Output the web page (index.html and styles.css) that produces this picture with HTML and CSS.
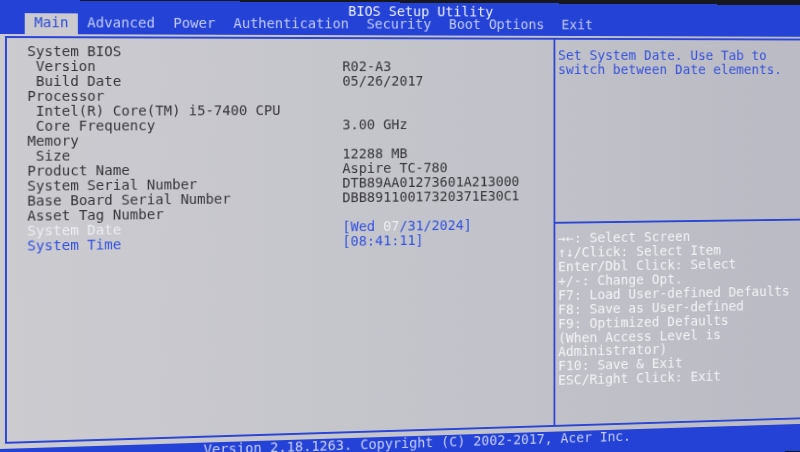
FILE: index.html
```html
<!DOCTYPE html>
<html lang="en">
<head>
<meta charset="utf-8">
<title>BIOS Setup Utility</title>
<link rel="stylesheet" href="styles.css">
</head>
<body>
<div class="screen">
  <header class="topbar">
    <div class="title">BIOS Setup Utility</div>
    <nav class="tabs">
      <span class="tab active">Main</span>
      <span class="tab">Advanced</span>
      <span class="tab">Power</span>
      <span class="tab">Authentication</span>
      <span class="tab">Security</span>
      <span class="tab">Boot Options</span>
      <span class="tab">Exit</span>
    </nav>
  </header>
  <main class="content">
    <div class="frame">
      <section class="info">
        <div class="row"><span>System BIOS</span></div>
        <div class="row"><span class="sub">Version</span><span>R02-A3</span></div>
        <div class="row"><span class="sub">Build Date</span><span>05/26/2017</span></div>
        <div class="row"><span>Processor</span></div>
        <div class="row"><span class="sub">Intel(R) Core(TM) i5-7400 CPU</span></div>
        <div class="row"><span class="sub">Core Frequency</span><span>3.00 GHz</span></div>
        <div class="row"><span>Memory</span></div>
        <div class="row"><span class="sub">Size</span><span>12288 MB</span></div>
        <div class="row"><span>Product Name</span><span>Aspire TC-780</span></div>
        <div class="row"><span>System Serial Number</span><span>DTB89AA01273601A213000</span></div>
        <div class="row"><span>Base Board Serial Number</span><span>DBB89110017320371E30C1</span></div>
        <div class="row"><span>Asset Tag Number</span></div>
        <div class="row"><span class="selected">System Date</span><span class="blue">[Wed <span class="selected">07</span>/31/2024]</span></div>
        <div class="row"><span class="blue">System Time</span><span class="blue">[08:41:11]</span></div>
      </section>
      <aside class="help">
        <div class="help-top">
          <div class="line">Set System Date. Use Tab to</div>
          <div class="line">switch between Date elements.</div>
        </div>
        <div class="help-keys">
          <div class="line">→←: Select Screen</div>
          <div class="line">↑↓/Click: Select Item</div>
          <div class="line">Enter/Dbl Click: Select</div>
          <div class="line">+/-: Change Opt.</div>
          <div class="line">F7: Load User-defined Defaults</div>
          <div class="line">F8: Save as User-defined</div>
          <div class="line">F9: Optimized Defaults</div>
          <div class="line">(When Access Level is</div>
          <div class="line">Administrator)</div>
          <div class="line">F10: Save &amp; Exit</div>
          <div class="line">ESC/Right Click: Exit</div>
        </div>
      </aside>
    </div>
  </main>
  <footer class="bottombar">Version 2.18.1263. Copyright (C) 2002-2017, Acer Inc.</footer>
</div>
</body>
</html>
```
FILE: styles.css
```css
html, body {
  margin: 0;
  padding: 0;
  width: 800px;
  height: 452px;
  overflow: hidden;
  background: #17171e;
}

* {
  box-sizing: border-box;
}

.screen {
  width: 880px;
  height: 478px;
  display: flex;
  flex-direction: column;
  font-family: "DejaVu Sans Mono", "Liberation Mono", monospace;
  font-size: 14.5px;
  transform-origin: 0 75px;
  transform: perspective(1500px) rotateY(7.16deg);
}

.topbar {
  height: 34px;
  background: #2443d6;
  display: grid;
  grid-template-rows: 13px 21px;
}

.title {
  height: 13px;
  line-height: 19px;
  text-align: center;
  color: #eef0ff;
}

.tabs {
  display: flex;
  padding-left: 25px;
}

.tab {
  padding: 0 9.5px;
  line-height: 19px;
  color: #c3cbf3;
  white-space: pre;
}

.tab.active {
  background: #cacacf;
  color: #2e48d6;
}

.content {
  height: 415px;
  padding: 2px 0 0 5px;
  background: linear-gradient(to right, #cbcbd0, #c2c2ca 60%, #babac4);
}

.frame {
  width: 871px;
  height: 408px;
  border: 2px solid #2b45d4;
  display: grid;
  grid-template-columns: 578px 1fr;
}

.info {
  padding: 6px 0 0 20.5px;
  color: #35353a;
}

.row {
  display: grid;
  grid-template-columns: 327.8px auto;
  height: 15px;
  line-height: 15px;
  white-space: pre;
}

.sub {
  padding-left: 1ch;
}

.blue {
  color: #3151e0;
}

.selected {
  color: #eceef4;
}

.help {
  border-left: 2px solid #2b45d4;
  display: flex;
  flex-direction: column;
}

.line {
  white-space: pre;
}

.help-top {
  height: 193px;
  border-bottom: 2px solid #2b45d4;
  padding: 8.5px 0 0 3px;
  line-height: 15px;
  color: #3452dc;
}

.help-keys {
  padding: 8.2px 0 0 3px;
  line-height: 14.9px;
  color: #f3f3f6;
}

.bottombar {
  height: 29px;
  background: #2443d6;
  text-align: center;
  line-height: 14px;
  color: #c8cff5;
}
```
